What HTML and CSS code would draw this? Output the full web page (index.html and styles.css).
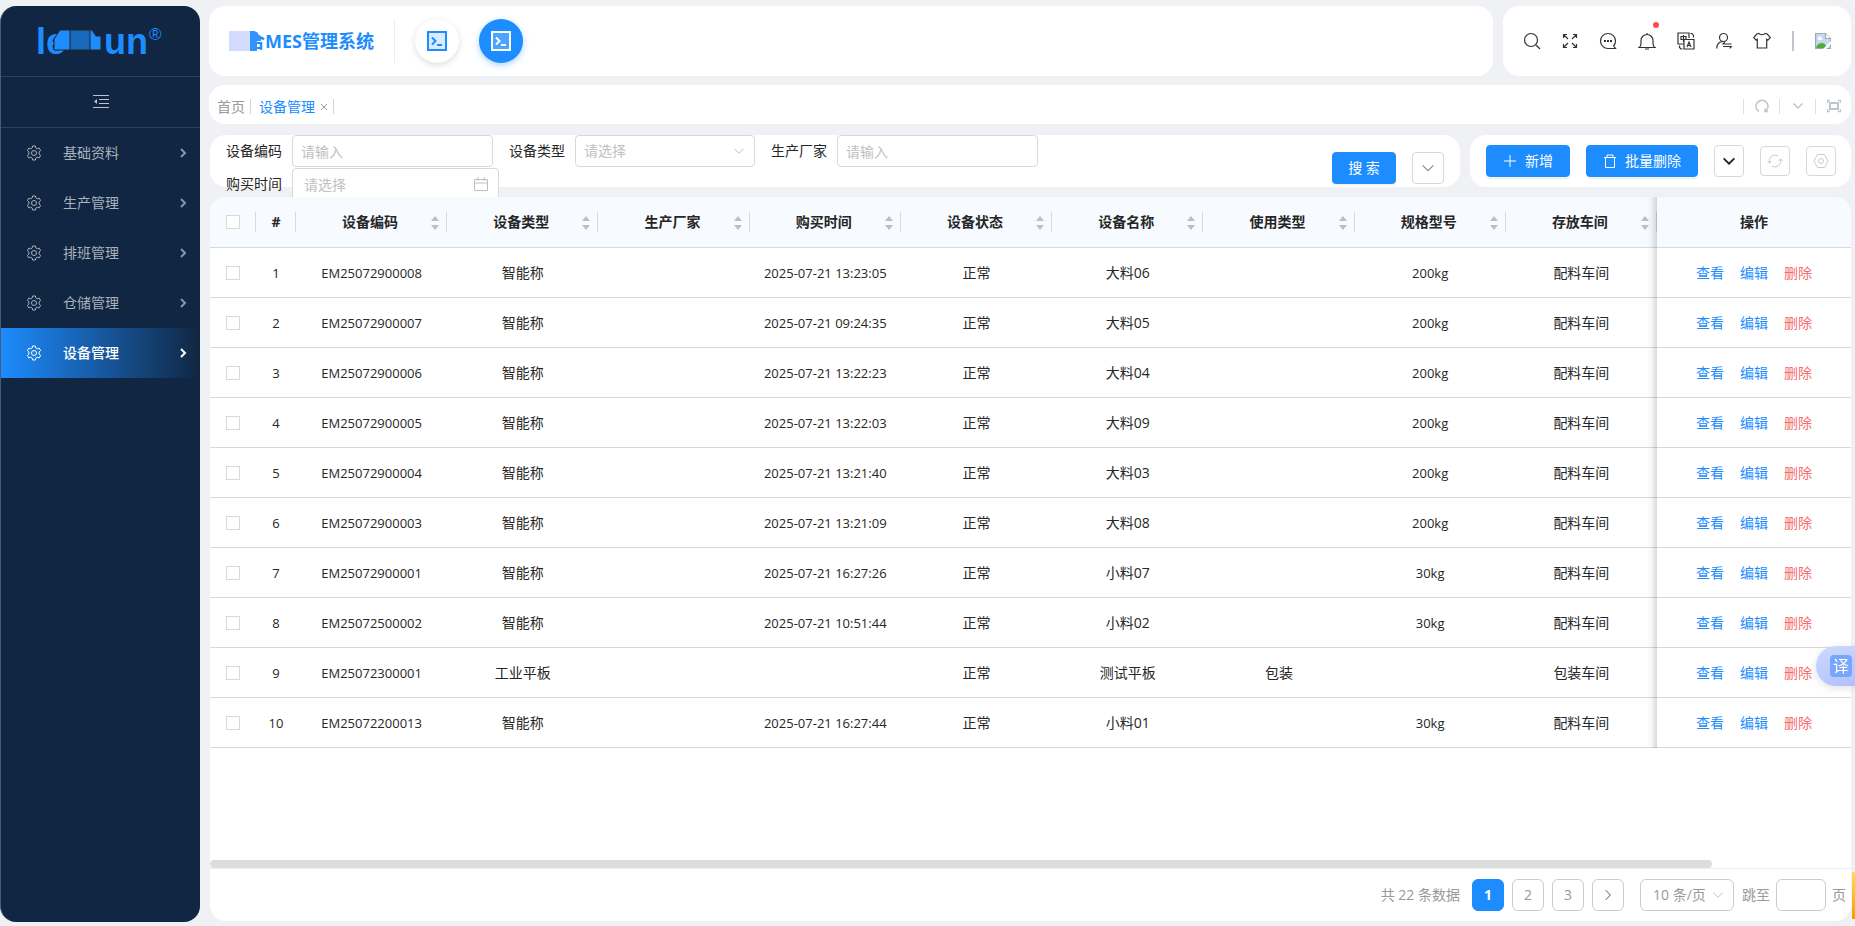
FILE: index.html
```
<!DOCTYPE html>
<html lang="zh-CN">
<head>
    <meta charset="UTF-8">
    <meta name="viewport" content="width=device-width, initial-scale=1.0">
    <title>MES管理系统 - 设备管理</title>
    <link rel="stylesheet" href="styles.css">
</head>
<body>
    <!-- 图标 -->
    <svg class="icon-sprite" aria-hidden="true">
        <symbol id="i-gear" viewBox="0 0 16 16"><path d="M6.6 1h2.8l.4 1.9 1.5.9 1.9-.7 1.4 2.5-1.5 1.3v2.2l1.5 1.3-1.4 2.5-1.9-.7-1.5.9-.4 1.9H6.6l-.4-1.9-1.5-.9-1.9.7-1.4-2.5 1.5-1.3V6.9L1.4 5.6l1.4-2.5 1.9.7 1.5-.9z"/><circle cx="8" cy="8" r="2.5"/></symbol>
        <symbol id="i-arrow" viewBox="0 0 10 10"><path d="M3 1l4 4-4 4"/></symbol>
        <symbol id="i-down" viewBox="0 0 10 10"><path d="M.5 2.8L5 7.3l4.500-4.500"/></symbol>
        <symbol id="i-terminal" viewBox="0 0 20 20"><rect class="box" x="1" y="1" width="18" height="18"/><path d="M5 6.500l3.500 3.500L5 13.500M10 14h5"/></symbol>
        <symbol id="i-sort" viewBox="0 0 8 14"><path d="M4 0l4 5H0zM4 14l4-5H0z"/></symbol>
    </svg>

    <aside class="sidebar">
        <a class="logo" href="#">
            <svg width="130" height="36" viewBox="0 0 130 36" role="img">
                <text class="logo-text" x="0" y="31">le</text>
                <text class="logo-text" x="68" y="31">un</text>
                <path d="M18 27V16l6-9h32l4 6h5v14z" fill="#1c8cff"/>
                <rect x="34" y="7" width="20" height="20" fill="#1a68ba"/>
                <text class="logo-mark" x="113" y="17">®</text>
            </svg>
        </a>
        <button class="collapse" aria-label="收起菜单">
            <svg width="16" height="14" viewBox="0 0 16 14"><path d="M0 .5h16M6 4.500h10M6 8.500h10M0 12.500h16"/><path d="M4 4v5L1 6.500z" fill="currentColor" stroke="none"/></svg>
        </button>
        <nav class="menu">
            <a href="#"><svg class="gear"><use href="#i-gear"/></svg><span>基础资料</span><svg class="arrow"><use href="#i-arrow"/></svg></a>
            <a href="#"><svg class="gear"><use href="#i-gear"/></svg><span>生产管理</span><svg class="arrow"><use href="#i-arrow"/></svg></a>
            <a href="#"><svg class="gear"><use href="#i-gear"/></svg><span>排班管理</span><svg class="arrow"><use href="#i-arrow"/></svg></a>
            <a href="#"><svg class="gear"><use href="#i-gear"/></svg><span>仓储管理</span><svg class="arrow"><use href="#i-arrow"/></svg></a>
            <a href="#" class="active"><svg class="gear"><use href="#i-gear"/></svg><span>设备管理</span><svg class="arrow"><use href="#i-arrow"/></svg></a>
        </nav>
    </aside>

    <main class="main">
        <header class="topbar">
            <div class="card brand">
                <h1><span class="brand-tag"><svg width="36" height="20" viewBox="0 0 36 20"><path d="M0 0h21v20H0z" fill="#d3dcfe"/><path d="M21 0h5l6 8v2h-4v10h-7z" fill="#3493fe"/></svg></span>合MES管理系统</h1>
                <button class="app" aria-label="应用一"><svg><use href="#i-terminal"/></svg></button>
                <button class="app current" aria-label="应用二"><svg><use href="#i-terminal"/></svg></button>
            </div>
            <div class="card tools">
                <button aria-label="搜索"><svg width="18" height="18" viewBox="0 0 18 18"><circle cx="8" cy="8" r="6.500"/><path d="M13 13l4 4"/></svg></button>
                <button aria-label="全屏"><svg width="16" height="18" viewBox="0 0 16 18"><path d="M1.500 6V2.500H5M11 2.500h3.500V6M14.500 12v3.500H11M5 15.500H1.500V12M2 3l4 4M14 3l-4 4M2 15l4-4M14 15l-4-4"/></svg></button>
                <button aria-label="消息"><svg width="18" height="18" viewBox="0 0 18 18"><path d="M16.500 16.500H9A7.500 7.500 0 1 1 16.500 9c0 2-.8 3.800-1.800 5z"/><path d="M5 8h2v2H5zM8 8h2v2H8zM11 8h2v2h-2z" fill="currentColor" stroke="none"/></svg></button>
                <button class="bell" aria-label="通知"><svg width="18" height="18" viewBox="1 0 18 18"><path d="M2 15.500c1.500-1 2-2 2-4V8.500a6 6 0 0 1 12 0v3c0 2 .5 3 2 4zM10 2.500V1M8 17h4"/></svg></button>
                <button aria-label="语言"><svg width="18" height="18" viewBox="0 0 18 18"><path d="M7 12H1V1h11v5M4 4.500h5v3H4zM6.500 3v7M7 7.500h10v9.500H7zM10 15l2-5 2 5M10.700 13.500h2.600M13.500 1.500h1.500l1.500 2v2M2.500 13.500v2l1.500 1.500h1.500"/></svg></button>
                <button aria-label="切换用户"><svg width="16" height="18" viewBox="0 0 16 18"><circle cx="7.500" cy="5.500" r="4"/><path d="M.8 16.500c0-4 2.400-6.500 5.700-7M15.500 12H7l1.800-1.800M7 14.500h8.500L13.700 16.300"/></svg></button>
                <button aria-label="主题"><svg width="18" height="18" viewBox="0 0 18 18"><path d="M6 1.500c1 1.600 5 1.600 6 0l2.300.5 3 3.700-2.300 2.300-1.300-.8V16H4.300V7.200L3 8 .7 5.700l3-3.700z"/></svg></button>
                <span class="rule"></span>
                <a class="avatar" href="#" aria-label="个人中心"><svg width="16" height="16" viewBox="0 0 16 16"><path d="M.5.500h10l5 5v10H.5z" fill="#c3d9f8" stroke="#a5a7aa"/><path d="M10.500.500v5h5" fill="#fff" stroke="#a5a7aa"/><path d="M3 5.500a1.500 1.500 0 0 1 3-1 1.500 1.500 0 0 1 1 2.500H3z" fill="#fff" stroke="none"/><path d="M1 15c1-4 4-5 6-5s4 1.500 5 5z" fill="#51ab38" stroke="none"/><path d="M8 16l8-8v3l-5 5z" fill="#fff" stroke="none"/></svg></a>
            </div>
        </header>

        <div class="card tabs">
            <a href="#">首页</a>
            <a href="#" class="on">设备管理 <svg width="8" height="8" viewBox="0 0 8 8"><path d="M1 1l6 6M7 1L1 7"/></svg></a>
            <div class="tab-tools">
                <button aria-label="刷新"><svg width="14" height="14" viewBox="0 0 14 14"><path d="M4 12.500a6 6 0 1 1 6 0M10 9.500v3h3"/></svg></button>
                <button aria-label="更多"><svg width="12" height="14" viewBox="0 0 12 14"><path d="M1.500 4.500L6 9l4.500-4.500"/></svg></button>
                <button aria-label="最大化"><svg width="14" height="14" viewBox="0 0 14 14"><path d="M.5 4V1.500H3M11 1.500h2.500V4M13.500 10v2.500H11M3 12.500H.5V10"/><rect x="3" y="4" width="8" height="6" stroke-width="2"/></svg></button>
            </div>
        </div>

        <div class="filters">
            <div class="card search">
                <form class="search-form">
                    <div class="field"><label for="code">设备编码</label><input id="code" type="text" placeholder="请输入"></div>
                    <div class="field"><label for="type">设备类型</label><span class="control"><select id="type"><option>请选择</option></select><svg class="caret"><use href="#i-down"/></svg></span></div>
                    <div class="field"><label for="maker">生产厂家</label><input id="maker" type="text" placeholder="请输入"></div>
                    <div class="field"><label for="buy">购买时间</label><span class="control"><input id="buy" class="date" type="text" placeholder="请选择"><svg class="cal" viewBox="0 0 14 14"><path d="M.5 2.500h13v11H.5zM.5 6h13M4 0v4M10 0v4"/></svg></span></div>
                </form>
                <button class="btn primary find">搜 索</button>
                <button class="btn square" aria-label="展开"><svg width="12" height="12"><use href="#i-down"/></svg></button>
            </div>
            <div class="card actions">
                <button class="btn primary"><svg width="14" height="14" viewBox="0 0 14 14"><path d="M7 1v12M1 7h12"/></svg>新增</button>
                <button class="btn primary"><svg width="14" height="14" viewBox="0 0 14 14"><path d="M1 3.500h12M4 3V1h6v2M2.500 4v9.500h9V4"/></svg>批量删除</button>
                <button class="btn small dark" aria-label="更多操作"><svg width="12" height="12"><use href="#i-down"/></svg></button>
                <button class="btn small pale" aria-label="刷新表格"><svg width="16" height="16" viewBox="0 0 16 16"><path d="M2.500 10A6 6 0 0 1 11 2.800M13.500 6A6 6 0 0 1 5 13.200M.5 8l2 2.200L4.500 8M11.500 8l2-2.200 2 2.200"/></svg></button>
                <button class="btn small pale" aria-label="列设置"><svg width="16" height="16" viewBox="0 0 16 16"><path d="M4.500 1.500h7L15 8l-3.500 6.500h-7L1 8z"/><circle cx="8" cy="8" r="2.500"/></svg></button>
            </div>
        </div>

        <section class="panel">
            <div class="table-wrap">
                <table>
                    <colgroup><col class="c-check"><col class="c-index"><col span="9"><col class="c-op"></colgroup>
                    <thead>
                        <tr>
                            <th><input type="checkbox" aria-label="全选"></th>
                            <th>#</th>
                            <th>设备编码<svg class="sort"><use href="#i-sort"/></svg></th>
                            <th>设备类型<svg class="sort"><use href="#i-sort"/></svg></th>
                            <th>生产厂家<svg class="sort"><use href="#i-sort"/></svg></th>
                            <th>购买时间<svg class="sort"><use href="#i-sort"/></svg></th>
                            <th>设备状态<svg class="sort"><use href="#i-sort"/></svg></th>
                            <th>设备名称<svg class="sort"><use href="#i-sort"/></svg></th>
                            <th>使用类型<svg class="sort"><use href="#i-sort"/></svg></th>
                            <th>规格型号<svg class="sort"><use href="#i-sort"/></svg></th>
                            <th>存放车间<svg class="sort"><use href="#i-sort"/></svg></th>
                            <th class="op">操作</th>
                        </tr>
                    </thead>
                    <tbody>
                        <tr><td><input type="checkbox" aria-label="选择第1行"></td><td class="num">1</td><td class="num">EM25072900008</td><td>智能称</td><td></td><td class="num">2025-07-21 13:23:05</td><td>正常</td><td>大料06</td><td></td><td class="num">200kg</td><td>配料车间</td><td class="op"><a href="#">查看</a><a href="#">编辑</a><a href="#" class="del">删除</a></td></tr>
                        <tr><td><input type="checkbox" aria-label="选择第2行"></td><td class="num">2</td><td class="num">EM25072900007</td><td>智能称</td><td></td><td class="num">2025-07-21 09:24:35</td><td>正常</td><td>大料05</td><td></td><td class="num">200kg</td><td>配料车间</td><td class="op"><a href="#">查看</a><a href="#">编辑</a><a href="#" class="del">删除</a></td></tr>
                        <tr><td><input type="checkbox" aria-label="选择第3行"></td><td class="num">3</td><td class="num">EM25072900006</td><td>智能称</td><td></td><td class="num">2025-07-21 13:22:23</td><td>正常</td><td>大料04</td><td></td><td class="num">200kg</td><td>配料车间</td><td class="op"><a href="#">查看</a><a href="#">编辑</a><a href="#" class="del">删除</a></td></tr>
                        <tr><td><input type="checkbox" aria-label="选择第4行"></td><td class="num">4</td><td class="num">EM25072900005</td><td>智能称</td><td></td><td class="num">2025-07-21 13:22:03</td><td>正常</td><td>大料09</td><td></td><td class="num">200kg</td><td>配料车间</td><td class="op"><a href="#">查看</a><a href="#">编辑</a><a href="#" class="del">删除</a></td></tr>
                        <tr><td><input type="checkbox" aria-label="选择第5行"></td><td class="num">5</td><td class="num">EM25072900004</td><td>智能称</td><td></td><td class="num">2025-07-21 13:21:40</td><td>正常</td><td>大料03</td><td></td><td class="num">200kg</td><td>配料车间</td><td class="op"><a href="#">查看</a><a href="#">编辑</a><a href="#" class="del">删除</a></td></tr>
                        <tr><td><input type="checkbox" aria-label="选择第6行"></td><td class="num">6</td><td class="num">EM25072900003</td><td>智能称</td><td></td><td class="num">2025-07-21 13:21:09</td><td>正常</td><td>大料08</td><td></td><td class="num">200kg</td><td>配料车间</td><td class="op"><a href="#">查看</a><a href="#">编辑</a><a href="#" class="del">删除</a></td></tr>
                        <tr><td><input type="checkbox" aria-label="选择第7行"></td><td class="num">7</td><td class="num">EM25072900001</td><td>智能称</td><td></td><td class="num">2025-07-21 16:27:26</td><td>正常</td><td>小料07</td><td></td><td class="num">30kg</td><td>配料车间</td><td class="op"><a href="#">查看</a><a href="#">编辑</a><a href="#" class="del">删除</a></td></tr>
                        <tr><td><input type="checkbox" aria-label="选择第8行"></td><td class="num">8</td><td class="num">EM25072500002</td><td>智能称</td><td></td><td class="num">2025-07-21 10:51:44</td><td>正常</td><td>小料02</td><td></td><td class="num">30kg</td><td>配料车间</td><td class="op"><a href="#">查看</a><a href="#">编辑</a><a href="#" class="del">删除</a></td></tr>
                        <tr><td><input type="checkbox" aria-label="选择第9行"></td><td class="num">9</td><td class="num">EM25072300001</td><td>工业平板</td><td></td><td></td><td>正常</td><td>测试平板</td><td>包装</td><td></td><td>包装车间</td><td class="op"><a href="#">查看</a><a href="#">编辑</a><a href="#" class="del">删除</a></td></tr>
                        <tr><td><input type="checkbox" aria-label="选择第10行"></td><td class="num">10</td><td class="num">EM25072200013</td><td>智能称</td><td></td><td class="num">2025-07-21 16:27:44</td><td>正常</td><td>小料01</td><td></td><td class="num">30kg</td><td>配料车间</td><td class="op"><a href="#">查看</a><a href="#">编辑</a><a href="#" class="del">删除</a></td></tr>
                    </tbody>
                </table>
            </div>
            <div class="scrollbar"></div>
            <footer class="pager">
                <span class="total">共 22 条数据</span>
                <button class="on">1</button>
                <button>2</button>
                <button>3</button>
                <button aria-label="下一页"><svg width="12" height="12"><use href="#i-arrow"/></svg></button>
                <span class="control size"><select aria-label="每页条数"><option>10 条/页</option></select><svg class="caret"><use href="#i-down"/></svg></span>
                <label for="jump">跳至</label>
                <input id="jump" type="text">
                <span>页</span>
            </footer>
        </section>
    </main>

    <!-- 悬浮挂件 -->
    <button class="translate"><span>译</span></button>
    <div class="side-strip"></div>
</body>
</html>
```
FILE: styles.css
```
* {
    margin: 0;
    padding: 0;
    box-sizing: border-box;
}

:root {
    --blue: #1c8cff;
    --navy: #112642;
    --line: #d9d9d9;
    --text: #262626;
    --muted: #999;
    --placeholder: #bfbfbf;
}

body {
    display: flex;
    gap: 9px;
    height: 100vh;
    padding: 6px 4px 4px 0;
    overflow: hidden;
    background: #f0f1f5;
    color: var(--text);
    font-family: "Open Sans", "Noto Sans CJK SC", sans-serif;
    font-size: 14px;
    line-height: 20px;
}

button, input, select {
    font: inherit;
    color: inherit;
    border: 0;
    background: none;
    outline: none;
}

button {
    cursor: pointer;
    white-space: nowrap;
}

a {
    color: inherit;
    text-decoration: none;
}

svg {
    display: block;
    flex-shrink: 0;
    fill: none;
    stroke: currentColor;
}

.icon-sprite {
    position: absolute;
    width: 0;
    height: 0;
}

.card {
    background: #fff;
    border-radius: 16px;
}

/* === 侧边栏 === */
.sidebar {
    width: 200px;
    flex-shrink: 0;
    overflow: hidden;
    background: var(--navy);
    border-left: 1px solid #4b5a70;
    border-radius: 16px;
}

.logo {
    display: flex;
    height: 71px;
    padding: 17px 0 0 35px;
    border-bottom: 1px solid #274169;
}

.logo-text {
    fill: var(--blue);
    stroke: none;
    font: bold 36px "Liberation Sans", sans-serif;
}

.logo-mark {
    fill: var(--blue);
    stroke: none;
    font: 17px "Liberation Sans", sans-serif;
}

.collapse {
    display: flex;
    align-items: center;
    justify-content: center;
    width: 100%;
    height: 51px;
    border-bottom: 1px solid #274169;
    color: #bcc3cc;
}

.menu a {
    display: flex;
    align-items: center;
    height: 50px;
    padding: 0 12px 0 25px;
    color: #a9b1bb;
}

.menu span {
    flex: 1;
    padding-left: 21px;
}

.menu .gear {
    width: 16px;
    height: 16px;
}

.menu .arrow {
    width: 10px;
    height: 10px;
    stroke-width: 2;
    opacity: 0.8;
}

.menu .active {
    margin-left: -1px;
    padding-left: 26px;
    color: #fff;
    font-weight: 500;
    background: linear-gradient(90deg, var(--blue), var(--navy));
}

.menu .active .arrow {
    opacity: 1;
}

/* === 顶栏 === */
.main {
    flex: 1;
    min-width: 0;
    display: flex;
    flex-direction: column;
}

.topbar {
    display: flex;
    gap: 10px;
    height: 70px;
    margin-bottom: 9px;
}

.brand {
    flex: 1;
    display: flex;
    align-items: center;
    gap: 20px;
    padding-left: 38px;
}

.brand h1 {
    position: relative;
    padding-right: 20px;
    border-right: 1px solid #ececec;
    color: var(--blue);
    font-size: 18px;
    line-height: 44px;
}

.brand-tag {
    position: absolute;
    left: -18px;
    top: 12px;
}

.brand-tag svg {
    stroke: none;
}

.app {
    display: flex;
    align-items: center;
    justify-content: center;
    width: 44px;
    height: 44px;
    border-radius: 50%;
    color: var(--blue);
    background: #fff;
    box-shadow: 0 2px 6px rgba(0, 0, 0, 0.14);
}

.app svg {
    width: 20px;
    height: 20px;
    stroke-width: 2;
    fill: #dbebff;
}

.app.current {
    color: #fff;
    background: var(--blue);
    box-shadow: 0 2px 6px rgba(28, 140, 255, 0.4);
}

.app.current svg {
    fill: #4ba4ff;
}

.tools {
    display: flex;
    align-items: center;
    gap: 21px;
    padding: 0 20px;
    color: #333;
}

.tools svg {
    stroke-width: 1.2;
}

.bell {
    position: relative;
}

.bell::after {
    content: "";
    position: absolute;
    top: -10px;
    right: -3px;
    width: 6px;
    height: 6px;
    border-radius: 50%;
    background: #ff4d4f;
}

.rule {
    width: 2px;
    height: 20px;
    background: #c0c4cc;
}

/* === 页签 === */
.tabs {
    display: flex;
    align-items: center;
    height: 39px;
    margin-bottom: 11px;
    padding: 4px 10px 0 8px;
    color: var(--muted);
}

.tabs > a {
    display: flex;
    align-items: center;
    gap: 5px;
    height: 15px;
    padding-right: 5px;
    margin-right: 8px;
    border-right: 1px solid #d4d4d4;
}

.tabs .on {
    color: var(--blue);
}

.tabs .on svg {
    color: var(--muted);
}

.tab-tools {
    display: flex;
    margin-left: auto;
    color: #c0c4cc;
}

.tab-tools button {
    display: flex;
    justify-content: center;
    width: 36px;
    height: 15px;
    border-left: 1px solid #dcdfe4;
}

.tab-tools button:last-child {
    width: 26px;
    justify-content: flex-end;
}

.tab-tools svg {
    stroke-width: 1.5;
}

/* === 查询条件 === */
.filters {
    display: flex;
    gap: 10px;
    height: 52px;
    margin: 0 0 10px 1px;
}

.search {
    flex: 1;
    display: flex;
    gap: 16px;
    padding: 0 16px;
}

.search-form {
    flex: 1;
    display: flex;
    flex-wrap: wrap;
    align-content: flex-start;
    gap: 1px 16px;
}

.field {
    display: flex;
    align-items: center;
    gap: 10px;
    height: 32px;
}

.field input,
.field select {
    display: block;
    width: 201px;
    height: 32px;
    padding: 0 8px;
    border: 1px solid var(--line);
    border-radius: 4px;
    background: #fff;
}

.field select {
    width: 180px;
    appearance: none;
    color: var(--placeholder);
}

.field .date {
    width: 207px;
    padding: 0 11px;
}

::placeholder {
    color: var(--placeholder);
}

.control {
    position: relative;
}

.control svg {
    position: absolute;
    top: 11px;
    right: 11px;
    width: 10px;
    height: 10px;
    color: var(--placeholder);
    pointer-events: none;
}

.control .cal {
    top: 9px;
    width: 14px;
    height: 14px;
}

.btn {
    display: flex;
    align-items: center;
    justify-content: center;
    height: 32px;
    border: 1px solid var(--line);
    border-radius: 4px;
    background: #fff;
    color: #8c8c8c;
}

.btn.primary {
    gap: 8px;
    padding: 0 16px;
    border-color: var(--blue);
    background: var(--blue);
    color: #fff;
    box-shadow: 0 2px 0 rgba(0, 0, 0, 0.05);
}

.search .btn {
    margin-top: 17px;
}

.btn.find {
    width: 64px;
    padding: 0;
}

.btn.square {
    width: 32px;
}

.btn.small {
    width: 30px;
}

.btn.dark {
    color: #222;
}

.btn.dark svg {
    stroke-width: 1.5;
}

.btn.pale {
    height: 30px;
    color: #c8ccd2;
}

.actions {
    display: flex;
    align-items: center;
    gap: 16px;
    padding: 0 15px 0 16px;
}

/* === 表格 === */
.panel {
    position: relative;
    flex: 1;
    min-height: 0;
    display: flex;
    flex-direction: column;
    margin: 0 0 1px 1px;
    overflow: hidden;
    background: #fff;
    border-radius: 16px;
}

.table-wrap {
    flex: 1;
    min-height: 0;
    overflow: hidden;
}

table {
    width: 100%;
    table-layout: fixed;
    border-collapse: separate;
    border-spacing: 0;
    text-align: center;
}

.c-check {
    width: 46px;
}

.c-index {
    width: 40px;
}

.c-op {
    width: 194px;
}

th, td {
    position: relative;
    height: 50px;
    border-bottom: 1px solid var(--line);
    background: #fff;
}

th {
    height: 51px;
    background: #f7faff;
    font-weight: bold;
}

th:nth-child(n+3):not(.op) {
    padding-right: 3px;
}

th::after {
    content: "";
    position: absolute;
    top: 15px;
    right: 0;
    width: 1px;
    height: 20px;
    background: var(--line);
}

th.op::after {
    display: none;
}

.num {
    font-size: 13px;
}

.sort {
    position: absolute;
    top: 19px;
    right: 8px;
    width: 8px;
    height: 14px;
    fill: #bfbfbf;
    stroke: none;
}

input[type="checkbox"] {
    display: block;
    width: 14px;
    height: 14px;
    margin: 0 auto;
    appearance: none;
    border: 1px solid var(--line);
    background: #fff;
}

/* 固定列左侧阴影 */
.op::before {
    content: "";
    position: absolute;
    top: 0;
    bottom: -1px;
    left: -10px;
    width: 10px;
    background: linear-gradient(90deg, transparent, rgba(0, 0, 0, 0.03) 40%, rgba(0, 0, 0, 0.15));
}

td.op {
    color: var(--blue);
}

.op a + a {
    margin-left: 16px;
}

.op .del {
    color: #f56c6c;
}

.scrollbar {
    width: 91.5%;
    height: 8px;
    border-radius: 4px;
    background: #dcdddf;
}

/* === 分页 === */
.pager {
    display: flex;
    align-items: center;
    justify-content: flex-end;
    gap: 8px;
    height: 53px;
    padding-right: 5px;
    border-top: 1px solid #ececec;
    color: var(--muted);
}

.total {
    margin-right: 4px;
}

.pager button,
.pager input,
.pager select {
    display: flex;
    align-items: center;
    justify-content: center;
    width: 32px;
    height: 32px;
    border: 1px solid #ccc;
    border-radius: 6px;
}

.pager .on {
    border-color: var(--blue);
    background: var(--blue);
    color: #fff;
    font-weight: bold;
}

.pager .size {
    margin-left: 8px;
}

.pager select {
    width: 94px;
    padding-left: 12px;
    appearance: none;
}

.pager input {
    width: 50px;
    margin: 0 -2px;
}

/* === 悬浮挂件 === */
.translate {
    position: fixed;
    right: 0;
    top: 646px;
    display: flex;
    align-items: center;
    width: 39px;
    height: 40px;
    padding-left: 14px;
    border-radius: 20px 0 0 20px;
    background: linear-gradient(160deg, #cddafe, #b1c0fd);
    box-shadow: 0 2px 8px rgba(0, 0, 0, 0.12);
}

.translate span {
    width: 22px;
    height: 22px;
    border-radius: 4px;
    background: #78a6f8;
    color: #fff;
    font-size: 16px;
    line-height: 22px;
}

.side-strip {
    position: fixed;
    right: 0;
    bottom: 7px;
    width: 3px;
    height: 47px;
    background: linear-gradient(#ffdf4a, #f90);
}
```
